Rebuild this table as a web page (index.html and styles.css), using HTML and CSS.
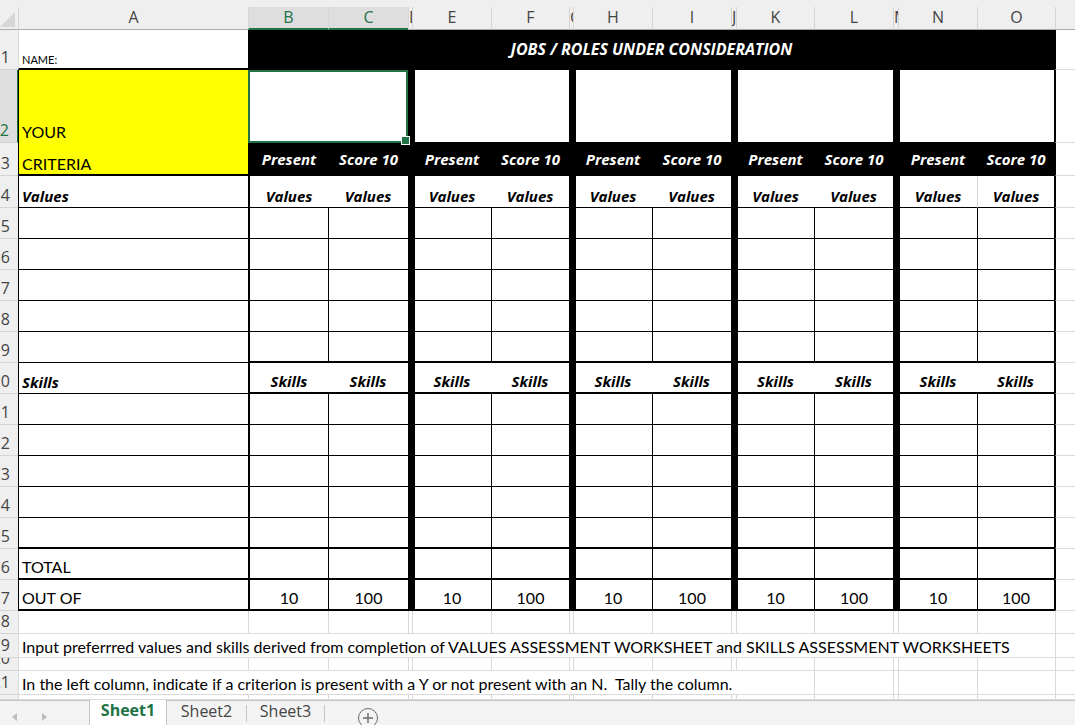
FILE: index.html
```html
<!DOCTYPE html>
<html>
<head>
<meta charset="utf-8">
<title>Jobs / Roles worksheet</title>
<link rel="stylesheet" href="styles.css">
</head>
<body>
<div class="app">
  <div class="strip"></div>
  <div class="sheet">
    <!-- column headers -->
    <div class="ch corner"><svg class="tri" width="18" height="23" viewBox="0 0 18 23"><polygon points="15,5 15,20 0,20" fill="#d6d6d6"/></svg></div>
    <div class="ch">A</div>
    <div class="ch on">B</div>
    <div class="ch on">C</div>
    <div class="ch nar">D</div>
    <div class="ch">E</div>
    <div class="ch">F</div>
    <div class="ch nar">G</div>
    <div class="ch">H</div>
    <div class="ch">I</div>
    <div class="ch nar">J</div>
    <div class="ch">K</div>
    <div class="ch">L</div>
    <div class="ch nar">M</div>
    <div class="ch">N</div>
    <div class="ch">O</div>
    <div class="ch"></div>

    <!-- row 1 -->
    <div class="rh">1</div>
    <div class="c a1">NAME:</div>
    <div class="c band bi">JOBS / ROLES UNDER CONSIDERATION</div>
    <div class="c pe"></div>

    <!-- row 2 -->
    <div class="rh on">2</div>
    <div class="c t yl a2">YOUR</div>
    <div class="c t s2 sel"></div>
    <div class="c t k"></div>
    <div class="c t s2"></div>
    <div class="c t k"></div>
    <div class="c t s2"></div>
    <div class="c t k"></div>
    <div class="c t s2"></div>
    <div class="c t k"></div>
    <div class="c t s2 oe"></div>
    <div class="c pe"></div>

    <!-- row 3 -->
    <div class="rh">3</div>
    <div class="c t yl bb2 a3">CRITERIA</div>
    <div class="c t hd bi bl2">Present</div>
    <div class="c t hd bi">Score 10</div>
    <div class="c t k"></div>
    <div class="c t hd bi">Present</div>
    <div class="c t hd bi">Score 10</div>
    <div class="c t k"></div>
    <div class="c t hd bi">Present</div>
    <div class="c t hd bi">Score 10</div>
    <div class="c t k"></div>
    <div class="c t hd bi">Present</div>
    <div class="c t hd bi">Score 10</div>
    <div class="c t k"></div>
    <div class="c t hd bi">Present</div>
    <div class="c t hd bi oe">Score 10</div>
    <div class="c pe"></div>

    <!-- row 4 -->
    <div class="rh">4</div>
    <div class="c t bi">Values</div>
    <div class="c t bl2 bi ctr">Values</div>
    <div class="c t nl bi ctr">Values</div>
    <div class="c t k"></div>
    <div class="c t bi ctr">Values</div>
    <div class="c t nl bi ctr">Values</div>
    <div class="c t k"></div>
    <div class="c t bi ctr">Values</div>
    <div class="c t nl bi ctr">Values</div>
    <div class="c t k"></div>
    <div class="c t bi ctr">Values</div>
    <div class="c t nl bi ctr">Values</div>
    <div class="c t k"></div>
    <div class="c t bi ctr">Values</div>
    <div class="c t gl bi ctr oe">Values</div>
    <div class="c pe"></div>

    <!-- rows 5-8 -->
    <div class="rh">5</div>
    <div class="c t"></div><div class="c t bl2"></div><div class="c t"></div><div class="c t k"></div>
    <div class="c t"></div><div class="c t"></div><div class="c t k"></div>
    <div class="c t"></div><div class="c t"></div><div class="c t k"></div>
    <div class="c t"></div><div class="c t"></div><div class="c t k"></div>
    <div class="c t"></div><div class="c t oe"></div><div class="c pe"></div>

    <div class="rh">6</div>
    <div class="c t"></div><div class="c t bl2"></div><div class="c t"></div><div class="c t k"></div>
    <div class="c t"></div><div class="c t"></div><div class="c t k"></div>
    <div class="c t"></div><div class="c t"></div><div class="c t k"></div>
    <div class="c t"></div><div class="c t"></div><div class="c t k"></div>
    <div class="c t"></div><div class="c t oe"></div><div class="c pe"></div>

    <div class="rh">7</div>
    <div class="c t"></div><div class="c t bl2"></div><div class="c t"></div><div class="c t k"></div>
    <div class="c t"></div><div class="c t"></div><div class="c t k"></div>
    <div class="c t"></div><div class="c t"></div><div class="c t k"></div>
    <div class="c t"></div><div class="c t"></div><div class="c t k"></div>
    <div class="c t"></div><div class="c t oe"></div><div class="c pe"></div>

    <div class="rh">8</div>
    <div class="c t"></div><div class="c t bl2"></div><div class="c t"></div><div class="c t k"></div>
    <div class="c t"></div><div class="c t"></div><div class="c t k"></div>
    <div class="c t"></div><div class="c t"></div><div class="c t k"></div>
    <div class="c t"></div><div class="c t"></div><div class="c t k"></div>
    <div class="c t"></div><div class="c t oe"></div><div class="c pe"></div>

    <!-- row 9 -->
    <div class="rh">9</div>
    <div class="c t"></div><div class="c t bl2 bb2"></div><div class="c t bb2"></div><div class="c t k"></div>
    <div class="c t bb2"></div><div class="c t bb2"></div><div class="c t k"></div>
    <div class="c t bb2"></div><div class="c t bb2"></div><div class="c t k"></div>
    <div class="c t bb2"></div><div class="c t bb2"></div><div class="c t k"></div>
    <div class="c t bb2"></div><div class="c t bb2 oe"></div><div class="c pe"></div>

    <!-- row 10 -->
    <div class="rh">10</div>
    <div class="c t bi">Skills</div>
    <div class="c t bl2 bb2 bi ctr">Skills</div>
    <div class="c t nl bb2 bi ctr">Skills</div>
    <div class="c t k"></div>
    <div class="c t bb2 bi ctr">Skills</div>
    <div class="c t nl bb2 bi ctr">Skills</div>
    <div class="c t k"></div>
    <div class="c t bb2 bi ctr">Skills</div>
    <div class="c t nl bb2 bi ctr">Skills</div>
    <div class="c t k"></div>
    <div class="c t bb2 bi ctr">Skills</div>
    <div class="c t nl bb2 bi ctr">Skills</div>
    <div class="c t k"></div>
    <div class="c t bb2 bi ctr">Skills</div>
    <div class="c t nl bb2 bi ctr oe">Skills</div>
    <div class="c pe"></div>

    <!-- rows 11-14 -->
    <div class="rh">11</div>
    <div class="c t"></div><div class="c t bl2"></div><div class="c t"></div><div class="c t k"></div>
    <div class="c t"></div><div class="c t"></div><div class="c t k"></div>
    <div class="c t"></div><div class="c t"></div><div class="c t k"></div>
    <div class="c t"></div><div class="c t"></div><div class="c t k"></div>
    <div class="c t"></div><div class="c t oe"></div><div class="c pe"></div>

    <div class="rh">12</div>
    <div class="c t"></div><div class="c t bl2"></div><div class="c t"></div><div class="c t k"></div>
    <div class="c t"></div><div class="c t"></div><div class="c t k"></div>
    <div class="c t"></div><div class="c t"></div><div class="c t k"></div>
    <div class="c t"></div><div class="c t"></div><div class="c t k"></div>
    <div class="c t"></div><div class="c t oe"></div><div class="c pe"></div>

    <div class="rh">13</div>
    <div class="c t"></div><div class="c t bl2"></div><div class="c t"></div><div class="c t k"></div>
    <div class="c t"></div><div class="c t"></div><div class="c t k"></div>
    <div class="c t"></div><div class="c t"></div><div class="c t k"></div>
    <div class="c t"></div><div class="c t"></div><div class="c t k"></div>
    <div class="c t"></div><div class="c t oe"></div><div class="c pe"></div>

    <div class="rh">14</div>
    <div class="c t"></div><div class="c t bl2"></div><div class="c t"></div><div class="c t k"></div>
    <div class="c t"></div><div class="c t"></div><div class="c t k"></div>
    <div class="c t"></div><div class="c t"></div><div class="c t k"></div>
    <div class="c t"></div><div class="c t"></div><div class="c t k"></div>
    <div class="c t"></div><div class="c t oe"></div><div class="c pe"></div>

    <!-- row 15 -->
    <div class="rh">15</div>
    <div class="c t bb2"></div><div class="c t bl2 bb2"></div><div class="c t bb2"></div><div class="c t k"></div>
    <div class="c t bb2"></div><div class="c t bb2"></div><div class="c t k"></div>
    <div class="c t bb2"></div><div class="c t bb2"></div><div class="c t k"></div>
    <div class="c t bb2"></div><div class="c t bb2"></div><div class="c t k"></div>
    <div class="c t bb2"></div><div class="c t bb2 oe"></div><div class="c pe"></div>

    <!-- row 16 -->
    <div class="rh">16</div>
    <div class="c t bb2">TOTAL</div><div class="c t bl2 bb2"></div><div class="c t bb2"></div><div class="c t k"></div>
    <div class="c t bb2"></div><div class="c t bb2"></div><div class="c t k"></div>
    <div class="c t bb2"></div><div class="c t bb2"></div><div class="c t k"></div>
    <div class="c t bb2"></div><div class="c t bb2"></div><div class="c t k"></div>
    <div class="c t bb2"></div><div class="c t bb2 oe"></div><div class="c pe"></div>

    <!-- row 17 -->
    <div class="rh">17</div>
    <div class="c t bb2">OUT OF</div><div class="c t bl2 bb2 ctr">10</div><div class="c t bb2 ctr">100</div><div class="c t k"></div>
    <div class="c t bb2 ctr">10</div><div class="c t bb2 ctr">100</div><div class="c t k"></div>
    <div class="c t bb2 ctr">10</div><div class="c t bb2 ctr">100</div><div class="c t k"></div>
    <div class="c t bb2 ctr">10</div><div class="c t bb2 ctr">100</div><div class="c t k"></div>
    <div class="c t bb2 ctr">10</div><div class="c t bb2 ctr oe">100</div><div class="c pe"></div>

    <!-- row 18 -->
    <div class="rh">18</div>
    <div class="c"></div><div class="c"></div><div class="c"></div><div class="c"></div>
    <div class="c"></div><div class="c"></div><div class="c"></div><div class="c"></div>
    <div class="c"></div><div class="c"></div><div class="c"></div><div class="c"></div>
    <div class="c"></div><div class="c"></div><div class="c"></div><div class="c"></div>

    <!-- row 19 -->
    <div class="rh">19</div>
    <div class="c s15 note">Input preferrred values and skills derived from completion of VALUES ASSESSMENT WORKSHEET and SKILLS ASSESSMENT WORKSHEETS</div>
    <div class="c"></div>

    <!-- row 20 -->
    <div class="rh">20</div>
    <div class="c"></div><div class="c"></div><div class="c"></div><div class="c"></div>
    <div class="c"></div><div class="c"></div><div class="c"></div><div class="c"></div>
    <div class="c"></div><div class="c"></div><div class="c"></div><div class="c"></div>
    <div class="c"></div><div class="c"></div><div class="c"></div><div class="c"></div>

    <!-- row 21 -->
    <div class="rh">21</div>
    <div class="c s11 note">In the left column, indicate if a criterion is present with a Y or not present with an N.  Tally the column.</div>
    <div class="c"></div><div class="c"></div><div class="c"></div><div class="c"></div><div class="c"></div>

    <!-- row 22 -->
    <div class="rh"></div>
    <div class="c"></div><div class="c"></div><div class="c"></div><div class="c"></div>
    <div class="c"></div><div class="c"></div><div class="c"></div><div class="c"></div>
    <div class="c"></div><div class="c"></div><div class="c"></div><div class="c"></div>
    <div class="c"></div><div class="c"></div><div class="c"></div><div class="c"></div>
  </div>

  <div class="tabs">
    <div class="nav"><span class="arr al"></span><span class="arr ar"></span></div>
    <div class="tab on">Sheet1</div>
    <div class="tab">Sheet2</div>
    <div class="sep"></div>
    <div class="tab t3">Sheet3</div>
    <div class="sep"></div>
    <div class="add">
      <svg width="22" height="24" viewBox="0 0 22 24"><circle cx="11" cy="17" r="9.5" fill="none" stroke="#6b6b6b" stroke-width="1"/><path d="M11 12v10M6 17h10" stroke="#6b6b6b" stroke-width="1.4"/></svg>
    </div>
  </div>
</div>
</body>
</html>
```

FILE: styles.css
```css
* { box-sizing: border-box; margin: 0; padding: 0; }
html, body { width: 1075px; height: 725px; overflow: hidden; }
body { background: #fff; font-family: "Lato", "Liberation Sans", sans-serif; font-size: 16px; color: #000; }

.app { display: flex; flex-direction: column; height: 725px; }
.strip { flex: none; height: 7px; background: #efefef; }

.sheet {
  flex: none;
  display: grid;
  grid-template-columns: 18px 230px 80px 80px 4px 79px 78px 4px 79px 79px 5px 78px 79px 5px 79px 78px 20px;
  grid-template-rows: 23px 40px 73px 33px 32px repeat(13, 31px) 23px 24px 13px 24px 5px;
}

/* column headers */
.ch {
  display: flex; align-items: center; justify-content: center;
  background: #efefef; border-left: 1px solid #d5d5d5; border-bottom: 1px solid #ababab;
  font-family: "Open Sans", "Noto Sans", sans-serif; font-size: 16px; color: #444;
  overflow: hidden; white-space: nowrap; line-height: 1.36;
}
.ch.corner { border-left: 0; align-items: flex-start; justify-content: flex-start; }
.ch.nar { justify-content: flex-start; }
.ch.on { background: #dedede; color: #217346; border-bottom: 2px solid #217346; }

/* row headers: numbers partly hidden at the left edge */
.rh {
  display: flex; align-items: flex-end; justify-content: flex-end;
  padding-right: 8px; background: #efefef; border-bottom: 1px solid #d5d5d5;
  font-family: "Open Sans", "Noto Sans", sans-serif; font-size: 16px; color: #444;
  overflow: hidden; white-space: nowrap; line-height: 1.36;
}
.rh.on { background: #dedede; color: #217346; border-right: 1px solid #217346; }

/* cells */
.c {
  display: flex; align-items: flex-end; overflow: hidden; white-space: nowrap;
  border-left: 1px solid #dadada; border-bottom: 1px solid #dadada;
  padding: 0 3px 2px; line-height: 1.2;
}
.t { border-left-color: #000; border-bottom-color: #000; }
.bl2 { border-left-width: 2px; }
.nl { border-left: 0; }
.gl { border-left-color: #dadada; }
.bb2 { border-bottom-width: 2px; }
.k { background: #000; }
.yl { background: #ff0; }
.hd { background: #000; color: #fff; justify-content: center; align-items: center; padding-bottom: 0; }
.bi { font-family: "Open Sans", "Noto Sans", sans-serif; font-weight: 700; font-style: italic; font-size: 15px; }
.ctr { justify-content: center; }
.oe { border-right: 1px solid #000; }
.pe { border-left-color: #000; }
.s2 { grid-column: span 2; }
.s11 { grid-column: span 11; }
.s15 { grid-column: span 15; }

.a1 { font-size: 11px; border-bottom: 2px solid #000; padding-bottom: 2px; }
.a2 { border-bottom: 0; }
.a3 { padding-bottom: 1px; }
.band {
  grid-column: span 14; background: #000; color: #fff; border: 0;
  justify-content: center; align-items: center; padding: 0; font-size: 16px;
}
.sel { border: 2px solid #217346; position: relative; overflow: visible; }
.sel::after {
  content: ""; position: absolute; right: -4px; bottom: -4px;
  width: 7px; height: 7px; background: #217346; border: 1px solid #fff;
}
.note { white-space: pre; padding-bottom: 1px; }

/* sheet tabs */
.tabs {
  flex: none; height: 25px; display: flex; align-items: stretch;
  background: #f3f3f3; border-top: 1px solid #c6c6c6;
  font-family: "Open Sans", "Noto Sans", sans-serif; font-size: 16px; color: #444;
}
.nav { flex: none; width: 89px; display: flex; align-items: flex-start; padding-top: 12px; }
.arr { width: 0; height: 0; border-top: 4px solid transparent; border-bottom: 4px solid transparent; }
.al { border-right: 5px solid #bdbdbd; margin-left: 12px; }
.ar { border-left: 5px solid #bdbdbd; margin-left: 25px; }
.tab { flex: none; width: 79px; display: flex; justify-content: center; line-height: 1.36; }
.tab.on {
  width: 78px; margin-top: -1px; background: #fff;
  border-left: 1px solid #c6c6c6; border-right: 1px solid #c6c6c6;
  color: #217346; font-weight: 700;
}
.tab.t3 { width: 77px; }
.sep { flex: none; width: 1px; background: #c6c6c6; margin: 4px 0 3px; }
.add { flex: none; margin-left: 32px; width: 22px; }
.add svg { display: block; }
```
